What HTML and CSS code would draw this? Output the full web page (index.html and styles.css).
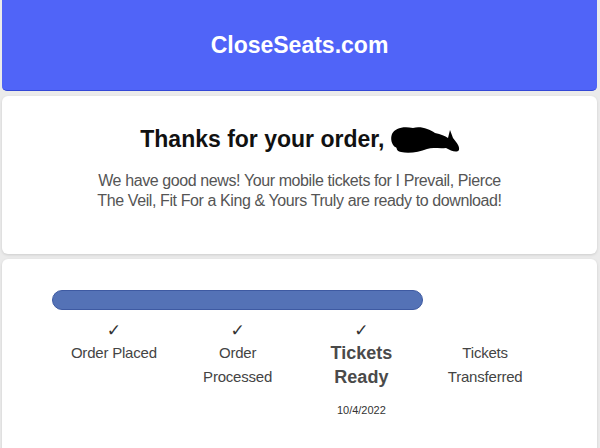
FILE: index.html
```html
<!DOCTYPE html>
<html>
<head>
<meta charset="utf-8">
<link rel="stylesheet" href="styles.css">
</head>
<body>
<div class="page">
  <header class="header">
    <h1 class="brand">CloseSeats.com</h1>
  </header>
  <section class="card intro">
    <h2 class="thanks">Thanks for your order, <span class="redact"><svg width="72" height="30" viewBox="0 0 72 30"><path d="M3 9 C6 3 14 1 24 3 C32 1 40 4 46 8 C52 9 56 11 59 13 L61 5 L64 13 C67 17 71 21 70 25 C68 28 62 26 57 23 C50 24 44 22 38 24 C30 27 20 29 12 27 C6 26 9 22 6 22 C3 20 1 14 3 9 Z" fill="#000"/></svg></span></h2>
    <p class="news">We have good news! Your mobile tickets for I Prevail, Pierce The Veil, Fit For a King &amp; Yours Truly are ready to download!</p>
  </section>
  <section class="card progress">
    <div class="track"><div class="fill" style="width:75%"></div></div>
    <div class="steps">
      <div class="step"><div class="check">✓</div><div class="label">Order Placed</div></div>
      <div class="step"><div class="check">✓</div><div class="label">Order<br>Processed</div></div>
      <div class="step current"><div class="check">✓</div><div class="label">Tickets<br>Ready</div><div class="date">10/4/2022</div></div>
      <div class="step"><div class="check blank"></div><div class="label">Tickets<br>Transferred</div></div>
    </div>
  </section>
</div>
</body>
</html>
```
FILE: styles.css
```css
html, body {
  margin: 0;
  padding: 0;
  background: #ebebeb;
  font-family: "Liberation Sans", Arial, sans-serif;
}
.page {
  display: flex;
  flex-direction: column;
  gap: 5px;
  padding: 0 3px 0 2px;
}
.header {
  height: 90px;
  background: #5064f8;
  border-bottom: 1px solid #3347d6;
  border-radius: 0 0 5px 5px;
  display: flex;
  align-items: center;
  justify-content: center;
}
.brand {
  margin: 0;
  color: #fff;
  font-size: 23px;
  font-weight: bold;
  line-height: 28px;
}
.card {
  background: #fff;
  border-radius: 6px;
  box-shadow: 0 1px 3px rgba(0,0,0,0.13);
}
.intro {
  height: 158px;
  box-sizing: border-box;
  padding-top: 29px;
  text-align: center;
}
.thanks {
  margin: 0;
  font-size: 23px;
  line-height: 28px;
  font-weight: bold;
  color: #111;
}
.redact {
  display: inline-block;
  width: 70px;
  height: 28px;
  vertical-align: top;
  margin-left: -2px;
}
.redact svg {
  display: block;
}
.news {
  margin: 18px auto 0;
  width: 430px;
  font-size: 16px;
  line-height: 20px;
  letter-spacing: -0.4px;
  color: #555;
}
.progress {
  height: 200px;
  box-sizing: border-box;
  padding: 31px 50px 0;
}
.track {
  height: 20px;
}
.fill {
  height: 20px;
  box-sizing: border-box;
  background: #5472b6;
  border: 1px solid #3e5aa2;
  border-radius: 10px;
}
.steps {
  display: grid;
  grid-template-columns: repeat(4, 1fr);
  margin-top: 10px;
  text-align: center;
  color: #444;
}
.check {
  height: 20px;
  line-height: 20px;
  font-size: 17px;
  color: #333;
  font-family: "DejaVu Sans", sans-serif;
}
.label {
  margin-top: 1px;
  font-size: 15px;
  line-height: 24px;
  letter-spacing: -0.2px;
}
.current .label {
  font-size: 18px;
  font-weight: bold;
  letter-spacing: 0;
  color: #4a4a4a;
}
.current .check {
  font-weight: bold;
}
.date {
  margin-top: 13px;
  font-size: 11px;
  line-height: 16px;
  color: #333;
}
```
